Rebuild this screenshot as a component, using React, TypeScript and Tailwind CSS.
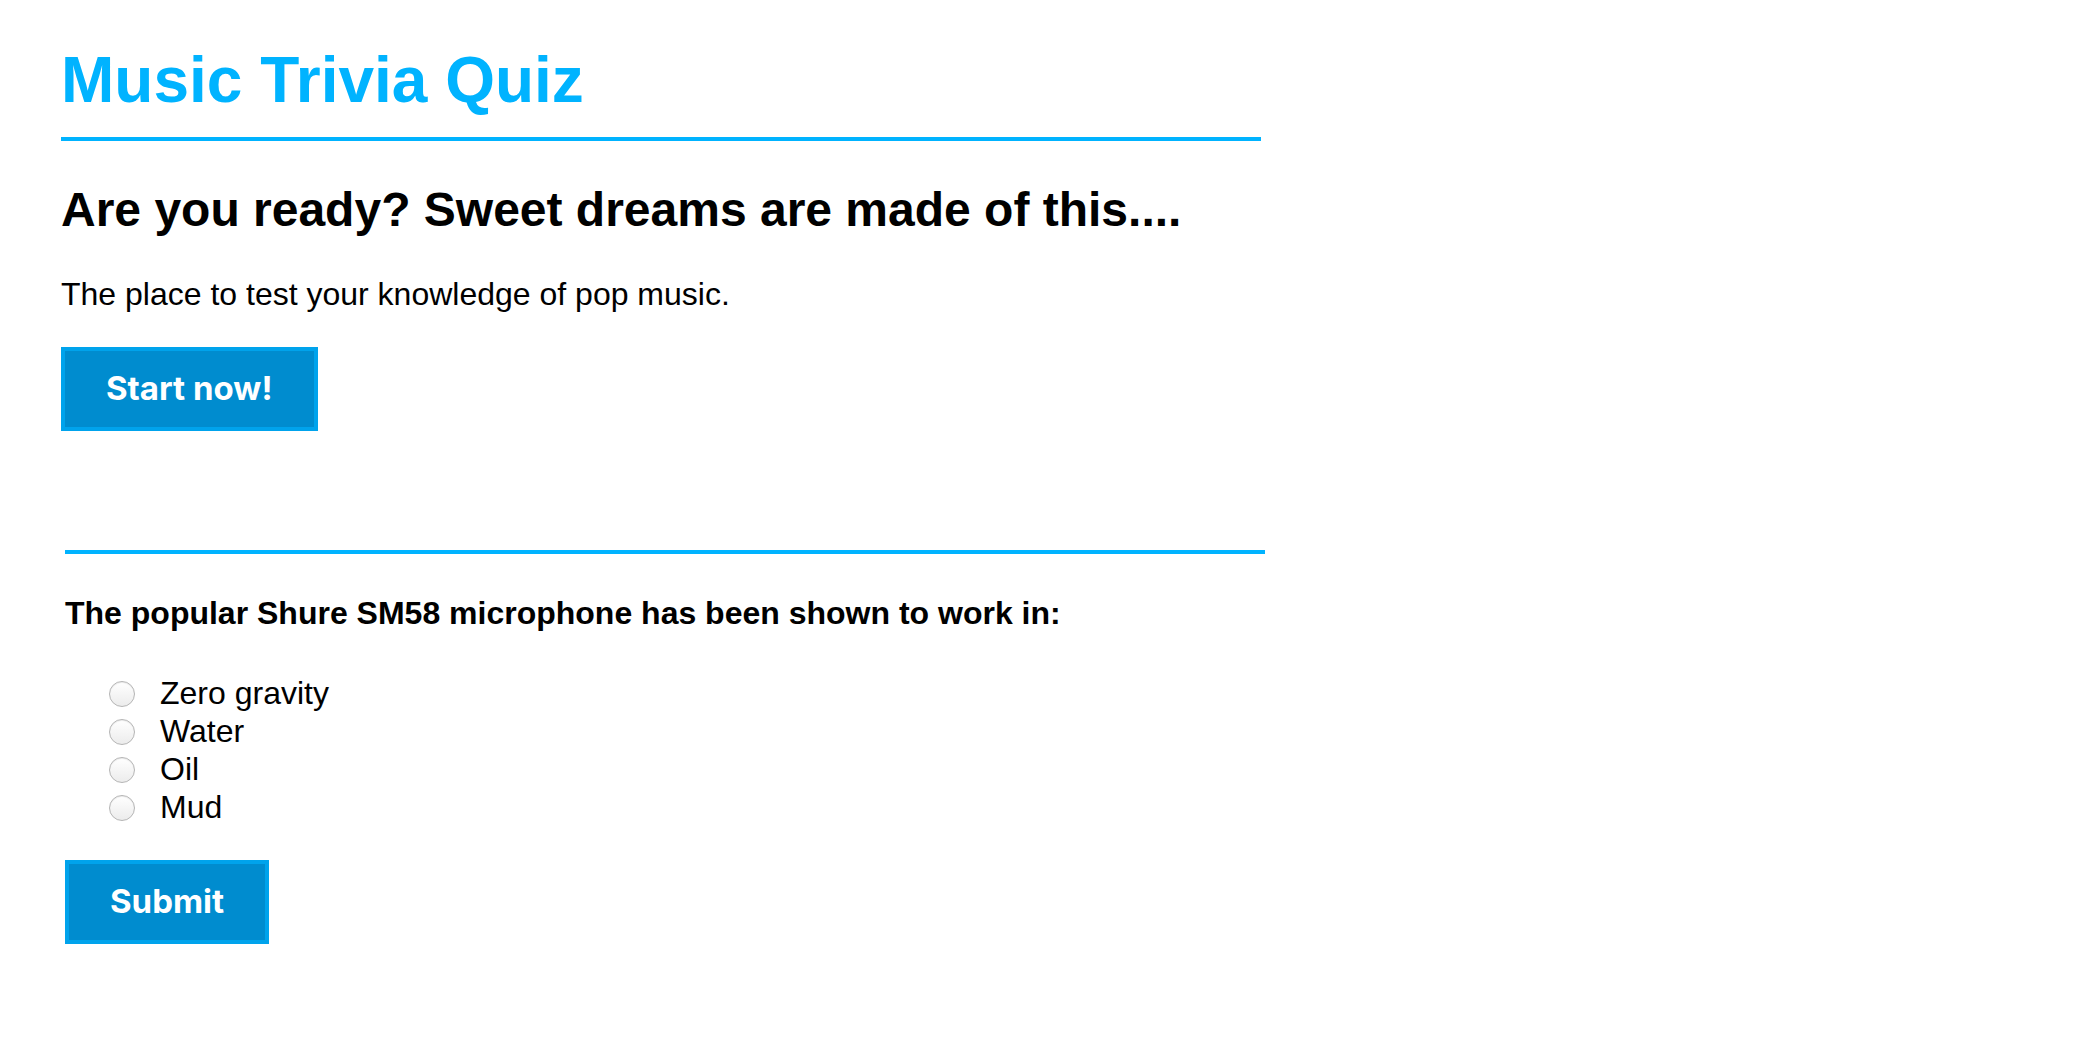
import { useState } from "react";

const answers = ["Zero gravity", "Water", "Oil", "Mud"];

const headFont = { fontFamily: '"Liberation Sans", Arial, sans-serif' };
const buttonFont = { fontFamily: 'Inter, "Liberation Sans", sans-serif' };

export default function App() {
  const [choice, setChoice] = useState<string | null>(null);

  return (
    <div className="min-h-screen w-full bg-white text-black" style={headFont}>
      {/* Intro */}
      <section className="ml-[61px] w-[1200px] pt-[48px]">
        <h1 className="border-b-4 border-[#00b3ff] pb-[24px] text-[64px] font-bold leading-[65px] text-[#00b3ff]">
          Music Trivia Quiz
        </h1>
        <h2 className="mt-[45px] text-[48px] font-bold leading-[48px]">
          Are you ready? Sweet dreams are made of this....
        </h2>
        <p className="mt-[44px] text-[32px] leading-[32px]">The place to test your knowledge of pop music.</p>
        <button
          className="mt-[37px] h-[84px] border-4 border-[#00a3ec] bg-[#008ccf] px-[41px] text-[33px] font-bold text-white"
          style={buttonFont}
        >
          Start now!
        </button>
      </section>

      {/* Question */}
      <section className="ml-[65px] mt-[119px] w-[1200px] border-t-4 border-[#00b3ff]">
        <h3 className="mt-[43px] text-[32px] font-bold leading-[32px]">
          The popular Shure SM58 microphone has been shown to work in:
        </h3>
        <div className="mt-[45px] flex flex-col pl-[44px]">
          {answers.map(a => (
            <label key={a} className="flex h-[38px] items-center gap-[25px] text-[32px] leading-[38px]">
              <input
                type="radio"
                name="answer"
                checked={choice === a}
                onChange={() => setChoice(a)}
                className="mt-[1px] h-[26px] w-[26px] appearance-none rounded-full border border-[#b5b5b5] bg-gradient-to-b from-white to-[#ececec] shadow-[inset_0_1px_1px_rgba(0,0,0,0.08)] checked:border-[6px] checked:border-[#1a82f7]"
              />
              <span>{a}</span>
            </label>
          ))}
        </div>
        <button
          className="mt-[34px] h-[84px] border-4 border-[#00a3ec] bg-[#008ccf] px-[41px] text-[33px] font-bold text-white"
          style={buttonFont}
        >
          Submit
        </button>
      </section>
    </div>
  );
}
